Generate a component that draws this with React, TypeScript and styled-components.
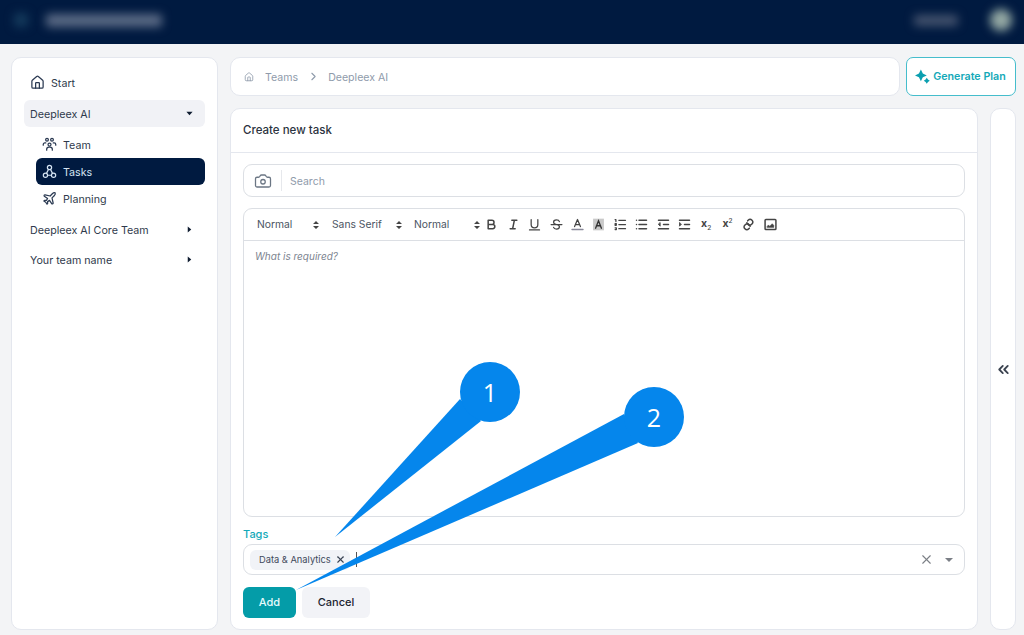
import * as React from "react"
import styled, { createGlobalStyle } from "styled-components"
import { Camera, ChevronRight, ChevronsLeft, House, Plane, X } from "lucide-react"

const palette = {
  navy: "#001a40",
  page: "#f3f4f6",
  border: "#e4e7ee",
  inputBorder: "#dcdfe4",
  teal: "#049ca8",
  tealText: "#14a9b8",
  text: "#2f3a4c",
  muted: "#8f9bab",
  callout: "#0586ec",
}

const GlobalStyle = createGlobalStyle`
  html, body {
    margin: 0;
    padding: 0;
    background: ${palette.page};
    font-family: Inter, "Liberation Sans", sans-serif;
    color: ${palette.text};
    overflow: hidden;
  }
  * {
    box-sizing: border-box;
  }
`

const Page = styled.div`
  position: relative;
  display: flex;
  flex-direction: column;
  height: 635px;
  width: 1024px;
  overflow: hidden;
`

const TopBar = styled.div`
  height: 44px;
  flex: none;
  background: ${palette.navy};
  display: flex;
  align-items: center;
  padding: 0 12px 4px 14px;
  overflow: hidden;
`

const Blur = styled.div<{ $w: number; $h: number; $color: string; $mr?: number; $round?: boolean }>`
  width: ${(p) => p.$w}px;
  height: ${(p) => p.$h}px;
  margin-right: ${(p) => p.$mr ?? 0}px;
  background: ${(p) => p.$color};
  border-radius: ${(p) => (p.$round ? "50%" : "3px")};
  filter: blur(5px);
`

const Spacer = styled.div`
  flex: 1;
`

const Body = styled.div`
  flex: 1;
  min-height: 0;
  display: flex;
  gap: 12px;
  padding: 13px 8px 5px 11px;
`

const Panel = styled.div`
  background: #fff;
  border: 1px solid ${palette.border};
  border-radius: 10px;
`

const Sidebar = styled(Panel)`
  width: 207px;
  flex: none;
  padding: 11px 12px;
  display: flex;
  flex-direction: column;
`

const NavRow = styled.div<{ $indent?: boolean; $active?: boolean; $open?: boolean; $mb?: number }>`
  height: 27px;
  margin-bottom: ${(p) => p.$mb ?? 0}px;
  margin-left: ${(p) => (p.$indent ? 12 : 0)}px;
  padding-left: 6px;
  padding-right: 12px;
  display: flex;
  align-items: center;
  gap: 6px;
  font-size: 10.7px;
  border-radius: 6px;
  color: ${(p) => (p.$active ? "#d5e4f2" : palette.text)};
  background: ${(p) => (p.$active ? palette.navy : p.$open ? "#f1f2f6" : "transparent")};
  svg {
    flex: none;
  }
`

const NavLabel = styled.span`
  flex: 1;
  padding-top: 1px;
  white-space: nowrap;
`

const Main = styled.div`
  flex: 1;
  min-width: 0;
  display: flex;
  flex-direction: column;
  gap: 12px;
`

const TopRow = styled.div`
  display: flex;
  gap: 6px;
  height: 39px;
  flex: none;
`

const Breadcrumb = styled(Panel)`
  flex: 1;
  display: flex;
  align-items: center;
  padding-left: 13px;
  font-size: 10.6px;
  color: ${palette.muted};
`

const Crumb = styled.span`
  margin-left: 11px;
  padding-top: 1px;
`

const CrumbArrow = styled(ChevronRight)`
  margin-left: 9px;
  margin-right: -3px;
`

const GenerateButton = styled.button`
  width: 110px;
  flex: none;
  background: #fff;
  border: 1.5px solid #45bdcc;
  border-radius: 7px;
  color: ${palette.tealText};
  font: 600 10.7px Inter, "Liberation Sans", sans-serif;
  display: flex;
  align-items: center;
  justify-content: center;
  gap: 3px;
  padding: 0 1px 0 0;
`

const LowerRow = styled.div`
  flex: 1;
  min-height: 0;
  display: flex;
  gap: 12px;
`

const Card = styled(Panel)`
  flex: 1;
  min-width: 0;
  display: flex;
  flex-direction: column;
`

const CardTitle = styled.div`
  height: 44px;
  flex: none;
  border-bottom: 1px solid ${palette.border};
  display: flex;
  align-items: center;
  padding: 0 0 1px 12px;
  font-size: 11.5px;
  font-weight: 500;
  color: #2b3340;
`

const CardBody = styled.div`
  flex: 1;
  min-height: 0;
  padding: 11px 12px 11px;
  display: flex;
  flex-direction: column;
`

const SearchBox = styled.div`
  height: 33px;
  flex: none;
  border: 1px solid ${palette.inputBorder};
  border-radius: 9px;
  display: flex;
  align-items: center;
  padding-left: 10px;
  margin-bottom: 11px;
  color: #6b7684;
  font-size: 10.5px;
`

const SearchDivider = styled.div`
  width: 1px;
  height: 21px;
  background: #e6e8ec;
  margin: 0 8px 0 9px;
`

const SearchText = styled.span`
  padding-top: 1px;
  color: ${palette.muted};
`

const Editor = styled.div`
  flex: 1;
  min-height: 0;
  border: 1px solid ${palette.inputBorder};
  border-radius: 9px;
  display: flex;
  flex-direction: column;
`

const Toolbar = styled.div`
  height: 32px;
  flex: none;
  border-bottom: 1px solid ${palette.inputBorder};
  display: flex;
  align-items: center;
  padding-left: 13px;
  color: #444;
`

const Picker = styled.div<{ $w: number; $pr: number }>`
  width: ${(p) => p.$w}px;
  flex: none;
  display: flex;
  align-items: center;
  justify-content: space-between;
  padding-right: ${(p) => p.$pr}px;
  font-size: 10.3px;
  color: #4a5462;
`

const PickerLabel = styled.span`
  margin-top: -1px;
`

const ToolIcon = styled.span`
  width: 21.45px;
  height: 16px;
  flex: none;
  display: flex;
  align-items: center;
  justify-content: center;
  font-size: 10.5px;
  font-weight: 700;
  line-height: 1;
  color: #444;

  sub, sup {
    font-size: 6.5px;
    font-weight: 500;
    line-height: 0;
  }
`

const EditorArea = styled.div`
  flex: 1;
  padding: 9px 11px;
  font-size: 10px;
  font-style: italic;
  color: #7d8490;
`

const TagsLabel = styled.div`
  margin: 8px 0 2px;
  height: 17px;
  flex: none;
  display: flex;
  align-items: center;
  font-size: 11px;
  font-weight: 500;
  color: ${palette.tealText};
`

const TagsInput = styled.div`
  height: 31px;
  flex: none;
  border: 1px solid ${palette.inputBorder};
  border-radius: 9px;
  display: flex;
  align-items: center;
  padding: 0 10px 0 6px;
`

const Tag = styled.div`
  height: 20px;
  display: flex;
  align-items: center;
  gap: 4px;
  background: #f1f3f7;
  border-radius: 6px;
  padding: 0 4px 0 9px;
  font-size: 9.3px;
  color: #3f4a5c;
`

const Caret = styled.div`
  width: 1px;
  height: 15px;
  background: #555;
  margin-left: 6px;
`

const ClearIcon = styled(X)`
  color: #7b7f86;
  margin-right: 11px;
`

const DropArrow = styled.div`
  width: 0;
  height: 0;
  border-left: 4px solid transparent;
  border-right: 4px solid transparent;
  border-top: 4px solid #7b7f86;
  margin-right: 1px;
`

const Actions = styled.div`
  margin-top: 12px;
  display: flex;
  gap: 6px;
`

const Button = styled.button<{ $primary?: boolean }>`
  height: 31px;
  width: ${(p) => (p.$primary ? 53 : 68)}px;
  border: none;
  border-radius: 6px;
  padding: 0 0 2px;
  font: 500 11px Inter, "Liberation Sans", sans-serif;
  background: ${(p) => (p.$primary ? palette.teal : "#f2f3f7")};
  color: ${(p) => (p.$primary ? "#e8fbfc" : "#1c2430")};
`

const CollapseRail = styled(Panel)`
  width: 26px;
  flex: none;
  display: flex;
  align-items: center;
  justify-content: center;
  color: #3b4350;
`

const Callouts = styled.svg`
  position: absolute;
  inset: 0;
  pointer-events: none;
`

const CalloutNumber = styled.text`
  fill: #fff;
  font-family: "Open Sans", "Noto Sans", sans-serif;
  font-size: 25px;
  text-anchor: middle;
`

const TeamIcon = () => (
  <svg width="15" height="15" viewBox="0 0 24 24" fill="none" stroke="#2b3a52" strokeWidth="2" strokeLinecap="round" strokeLinejoin="round">
    <circle cx="8" cy="4.5" r="2.2" />
    <circle cx="16" cy="4.5" r="2.2" />
    <circle cx="12" cy="12" r="2.4" />
    <path d="M7.5 21v-1.5a3.5 3.5 0 0 1 3.5-3.5h2a3.5 3.5 0 0 1 3.5 3.5V21" />
    <path d="M2 13v-1a2.5 2.5 0 0 1 2.5-2.5H6" />
    <path d="M22 13v-1a2.5 2.5 0 0 0-2.5-2.5H18" />
  </svg>
)

const TasksIcon = () => (
  <svg width="15" height="15" viewBox="0 0 24 24" fill="none" stroke="#d5e4f2" strokeWidth="1.9" strokeLinecap="round">
    <circle cx="12" cy="5.5" r="3.4" />
    <circle cx="5.5" cy="18" r="3.4" />
    <circle cx="18.5" cy="18" r="3.4" />
    <path d="M10.4 8.6 7.2 15M13.6 8.6l3.2 6.4M9 18h6" />
  </svg>
)

const SparkIcon = () => (
  <svg width="15" height="15" viewBox="0 0 14 14" fill="#0b9fb0">
    <path d="M5.5.5 7.3 4.2 11 6 7.3 7.8 5.5 11.5 3.7 7.8 0 6 3.7 4.2z" />
    <path d="M11 8.2 12.1 9.9 13.8 11 12.1 12.1 11 13.8 9.9 12.1 8.2 11 9.9 9.9z" />
  </svg>
)

const NavArrow = ({ open }: { open?: boolean }) => (
  <svg width="7" height="7" viewBox="0 0 8 8" fill="#0f1c30">
    {open ? <path d="M.5 2h7L4 6z" /> : <path d="M2 .5v7L6 4z" />}
  </svg>
)

const PickerArrows = () => (
  <svg width="8" height="10" viewBox="0 0 8 10" fill="#444">
    <path d="M1 4 4 1l3 3zM1 6h6L4 9z" />
  </svg>
)

const Quill = ({ children }: { children: React.ReactNode }) => (
  <svg width="15" height="15" viewBox="0 0 18 18" fill="none" stroke="#444" strokeWidth="1.8" strokeLinecap="round" strokeLinejoin="round">
    {children}
  </svg>
)

const HatchIcon = () => (
  <svg width="15" height="15" viewBox="0 0 18 18" fill="none" stroke="#333" strokeWidth="1.6" strokeLinecap="round">
    <rect x="2.5" y="2" width="13" height="14" fill="#c9c9c9" stroke="none" />
    <path d="M5.5 13.5 9 4.5l3.5 9M6.5 10.5h5" />
  </svg>
)

const toolIcons: React.ReactNode[] = [
  <Quill key="b">
    <path d="M5 4h4.5a2.5 2.5 0 0 1 0 5H5zM5 9h5.5a2.5 2.5 0 0 1 0 5H5z" />
  </Quill>,
  <Quill key="i">
    <path d="M7 4h6M5 14h6M8 14l2-10" />
  </Quill>,
  <Quill key="u">
    <path d="M5 3v6a4 4 0 0 0 8 0V3M3 15.5h12" strokeWidth="1.5" />
  </Quill>,
  <Quill key="s">
    <path d="M12.5 5.5C12 4 10.5 3.5 9 3.5c-2 0-3.5 1-3.5 2.7 0 1.5 1 2.3 3.5 2.8s3.500 1.300 3.500 2.800c0 1.700-1.500 2.700-3.500 2.700-1.500 0-3-.5-3.500-2M2.500 9h13" strokeWidth="1.5" />
  </Quill>,
  <Quill key="c">
    <path d="M5.5 11.5 9 3l3.5 8.500M6.500 9h5" strokeWidth="1.5" />
    <path d="M2.5 15h13" stroke="#889" />
  </Quill>,
  <HatchIcon key="bg" />,
  <Quill key="ol">
    <path d="M7 4h8M7 9h8M7 14h8M2.500 3h1v2.500M2.500 8h1.500v1H2.500v1H4M2.500 13H4v2H2.500" strokeWidth="1.5" />
  </Quill>,
  <Quill key="ul">
    <path d="M6 4h9M6 9h9M6 14h9M3 4h0M3 9h0M3 14h0" />
  </Quill>,
  <Quill key="out">
    <path d="M3 14h12M3 4h12M9 9h6" />
    <path d="M5 7v4L3 9z" fill="#444" strokeWidth="1" />
  </Quill>,
  <Quill key="in">
    <path d="M3 14h12M3 4h12M9 9h6" />
    <path d="M3 7v4l2-2z" fill="#444" strokeWidth="1" />
  </Quill>,
  <span key="sub">
    x<sub>2</sub>
  </span>,
  <span key="sup">
    x<sup>2</sup>
  </span>,
  <Quill key="link">
    <path d="M7 7l4 4" />
    <path d="M8 4.6 8.900 3.600a2.800 2.800 0 0 1 4 0l.5.5a2.800 2.800 0 0 1 0 4l-1 1a2.800 2.800 0 0 1-4 0" />
    <path d="M10 13.4l-1 1a2.800 2.800 0 0 1-4 0l-.5-.5a2.800 2.800 0 0 1 0-4l1-1a2.800 2.800 0 0 1 4 0" />
  </Quill>,
  <Quill key="img">
    <rect x="2.5" y="3" width="13" height="12" rx="1" />
    <path d="M5 12.5h8V10L11 8 8 11 6.500 9.500 5 11z" fill="#444" strokeWidth="0.5" />
  </Quill>,
]

const App: React.FC = () => {
  return (
    <>
      <GlobalStyle />
      <Page>
        <TopBar>
          <Blur $w={14} $h={14} $color="#143a5c" $mr={18} />
          <Blur $w={116} $h={13} $color="#5a6a85" />
          <Spacer />
          <Blur $w={44} $h={11} $color="#44536e" $mr={32} />
          <Blur $w={22} $h={22} $color="#93a8a3" $round />
        </TopBar>
        <Body>
          <Sidebar>
            <NavRow $mb={4}>
              <House size={15} color="#2b3a52" strokeWidth={2} />
              <NavLabel>Start</NavLabel>
            </NavRow>
            <NavRow $open $mb={4}>
              <NavLabel>Deepleex AI</NavLabel>
              <NavArrow open />
            </NavRow>
            <NavRow $indent>
              <TeamIcon />
              <NavLabel>Team</NavLabel>
            </NavRow>
            <NavRow $indent $active>
              <TasksIcon />
              <NavLabel>Tasks</NavLabel>
            </NavRow>
            <NavRow $indent $mb={4}>
              <Plane size={15} color="#2b3a52" strokeWidth={2} />
              <NavLabel>Planning</NavLabel>
            </NavRow>
            <NavRow $mb={3}>
              <NavLabel>Deepleex AI Core Team</NavLabel>
              <NavArrow />
            </NavRow>
            <NavRow>
              <NavLabel>Your team name</NavLabel>
              <NavArrow />
            </NavRow>
          </Sidebar>
          <Main>
            <TopRow>
              <Breadcrumb>
                <House size={10} strokeWidth={2} />
                <Crumb>Teams</Crumb>
                <CrumbArrow size={13} strokeWidth={2} />
                <Crumb>Deepleex AI</Crumb>
              </Breadcrumb>
              <GenerateButton>
                <SparkIcon />
                Generate Plan
              </GenerateButton>
            </TopRow>
            <LowerRow>
              <Card>
                <CardTitle>Create new task</CardTitle>
                <CardBody>
                  <SearchBox>
                    <Camera size={18} strokeWidth={1.7} />
                    <SearchDivider />
                    <SearchText>Search</SearchText>
                  </SearchBox>
                  <Editor>
                    <Toolbar>
                      <Picker $w={75} $pr={12}>
                        <PickerLabel>Normal</PickerLabel>
                        <PickerArrows />
                      </Picker>
                      <Picker $w={82} $pr={11}>
                        <PickerLabel>Sans Serif</PickerLabel>
                        <PickerArrows />
                      </Picker>
                      <Picker $w={67} $pr={0}>
                        <PickerLabel>Normal</PickerLabel>
                        <PickerArrows />
                      </Picker>
                      {toolIcons.map((icon, i) => (
                        <ToolIcon key={i}>{icon}</ToolIcon>
                      ))}
                    </Toolbar>
                    <EditorArea>What is required?</EditorArea>
                  </Editor>
                  <TagsLabel>Tags</TagsLabel>
                  <TagsInput>
                    <Tag>
                      Data &amp; Analytics
                      <X size={11} strokeWidth={2.4} color="#3a4454" />
                    </Tag>
                    <Caret />
                    <Spacer />
                    <ClearIcon size={15} strokeWidth={1.8} />
                    <DropArrow />
                  </TagsInput>
                  <Actions>
                    <Button $primary>Add</Button>
                    <Button>Cancel</Button>
                  </Actions>
                </CardBody>
              </Card>
              <CollapseRail>
                <ChevronsLeft size={17} strokeWidth={2.6} />
              </CollapseRail>
            </LowerRow>
          </Main>
        </Body>
        <Callouts width="1024" height="635" viewBox="0 0 1024 635">
          <path d="M460 399 335 537 481 421Z" fill={palette.callout} />
          <circle cx="490" cy="392" r="30" fill={palette.callout} />
          <CalloutNumber x="490" y="402">1</CalloutNumber>
          <path d="M624 414 296 590 638 443Z" fill={palette.callout} />
          <circle cx="654" cy="417" r="30" fill={palette.callout} />
          <CalloutNumber x="654" y="427">2</CalloutNumber>
        </Callouts>
      </Page>
    </>
  )
}

export default App
